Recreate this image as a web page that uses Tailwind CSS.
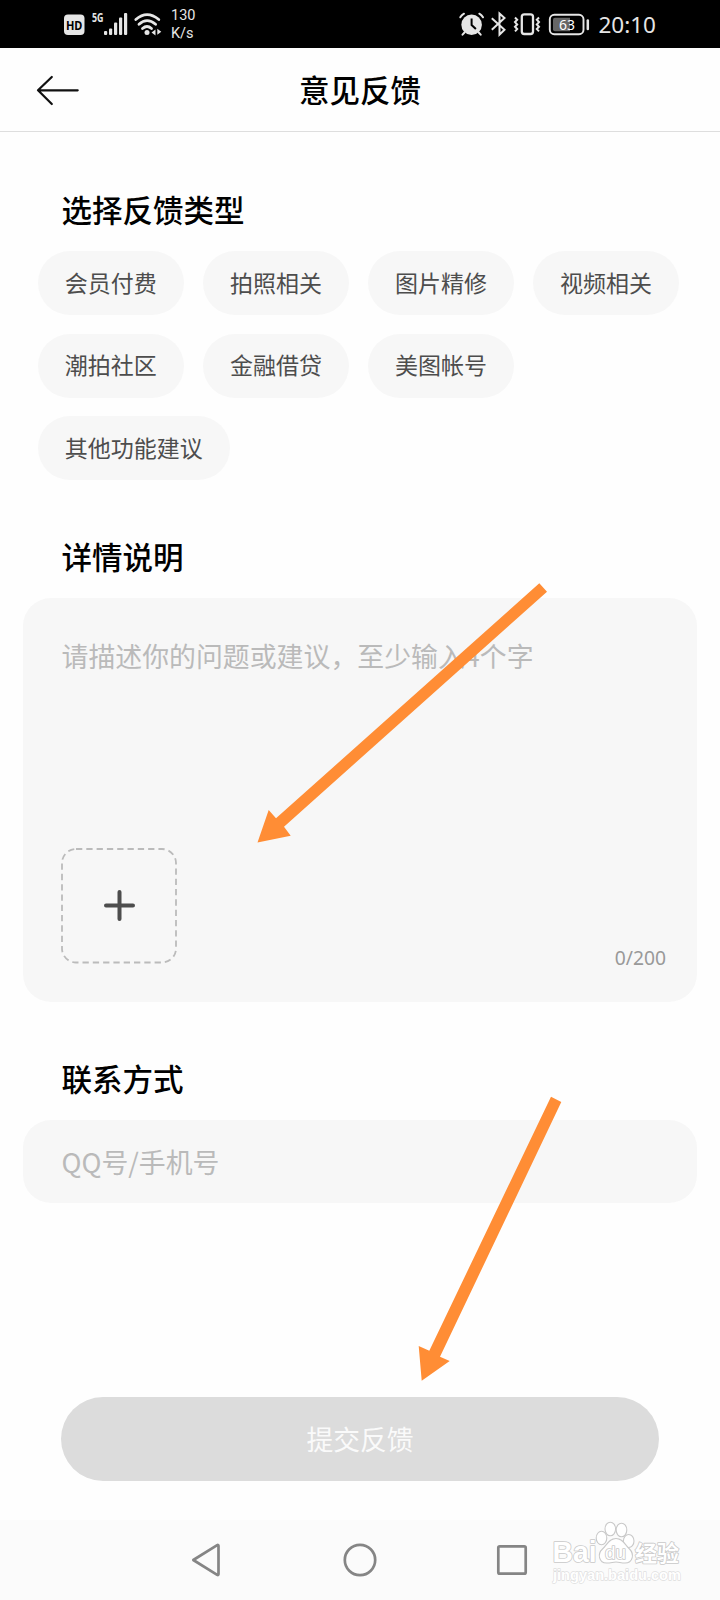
<!DOCTYPE html>
<html lang="zh-CN">
<head>
<meta charset="utf-8">
<title>意见反馈</title>
<script src="https://cdn.jsdelivr.net/npm/@tailwindcss/browser@4"></script>
</head>
<body class="bg-white">
<div class="relative flex h-[1600px] w-[720px] flex-col overflow-hidden bg-[#fefefe] font-['Noto_Sans_CJK_SC',sans-serif] text-black">

  <!-- Status bar -->
  <div class="flex h-12 shrink-0 items-center justify-between bg-black pr-[64px] pl-[60px] text-[#e6e6e6]">
    <div class="flex h-12">
      <svg class="h-12 w-[106px]" viewBox="60 0 106 48" fill="#e6e6e6">
        <rect x="64" y="14.5" width="20.5" height="20.5" rx="4"/>
        <text x="74.2" y="29.8" text-anchor="middle" font-family="Noto Sans" font-weight="700" font-size="12.5" textLength="16.5" lengthAdjust="spacingAndGlyphs" fill="#000">HD</text>
        <text x="92" y="22.3" font-family="Noto Sans" font-weight="700" font-size="12.5" textLength="11.5" lengthAdjust="spacingAndGlyphs">5G</text>
        <rect x="104" y="31" width="3.2" height="4" rx="1"/>
        <rect x="109" y="28.5" width="3.2" height="6.5" rx="1"/>
        <rect x="114" y="22.5" width="3.2" height="12.5" rx="1"/>
        <rect x="119" y="17.5" width="3.2" height="17.5" rx="1"/>
        <rect x="124" y="13" width="3.2" height="22" rx="1"/>
        <g fill="none" stroke="#e6e6e6" stroke-width="2.8" stroke-linecap="round">
          <path d="M135.800 19.500Q147 9.700 158.800 19.500"/>
          <path d="M139 24.300Q147 17 155.600 24.300"/>
          <path d="M142.500 28.500Q147 24.500 151.500 28.500"/>
        </g>
        <circle cx="147" cy="32.500" r="2.500"/>
        <path d="M151.500 32.500l4-3v6zM157.300 28.700l4 3-4 3z"/>
      </svg>
      <div class="flex flex-col pt-[7px] pl-[5px] font-[Roboto] text-[14.5px] leading-[17.5px]"><span>130</span><span>K/s</span></div>
    </div>
    <div class="flex h-12 items-center">
      <svg class="h-12 w-[136px]" viewBox="456 0 136 48" fill="none" stroke="#e6e6e6" stroke-width="2">
        <circle cx="471.600" cy="24.700" r="10.300" fill="#e6e6e6" stroke="none"/>
        <path d="M460.300 17.300q1.300-2.300 3.700-3.600M483 17.300q-1.300-2.300-3.700-3.600M464.500 32.500l-2 2.200M478.700 32.500l2 2.200" stroke-linecap="round"/>
        <path d="M471.600 18.500v6.500l4.300 4" stroke="#000"/>
        <path d="M491.800 18.300l12.700 11.400-5 5V13.500l5 4.500-12.700 11.800"/>
        <rect x="521.800" y="14.300" width="11.200" height="19.700" rx="2.500" stroke-width="2.300"/>
        <path d="M515 17.500l2.200 2.300-2.200 2.300 2.200 2.400-2.200 2.300 2.200 2.300-2.200 2.300M539 17.500l-2.200 2.300 2.200 2.300-2.200 2.400 2.200 2.300-2.200 2.300 2.200 2.300"/>
        <rect x="549.800" y="14.800" width="33.700" height="19.400" rx="4.500" stroke-width="1.900"/>
        <path d="M555 17.800h15v13.400h-15q-2 0-2-2v-9.400q0-2 2-2z" fill="#666" stroke="none"/>
        <path d="M587.800 20.500v8.500" stroke-width="2.500" stroke-linecap="round"/>
        <text x="567" y="29.800" text-anchor="middle" font-family="Noto Sans" font-size="15" textLength="16" lengthAdjust="spacingAndGlyphs" fill="#fff" stroke="none">63</text>
      </svg>
      <span class="pt-[3px] pl-[6px] font-['Noto_Sans'] text-[22.5px] leading-none">20:10</span>
    </div>
  </div>

  <!-- Title bar -->
  <header class="grid h-[84px] shrink-0 grid-cols-3 items-center border-b border-[#dedede] px-9">
    <svg class="h-8 w-11" viewBox="36 74 44 32" fill="none" stroke="#111" stroke-width="2.200" stroke-linecap="round" stroke-linejoin="round"><path d="M77.700 90.300H38M51.800 77L38 90.300 51.800 104"/></svg>
    <h1 class="pb-px text-center text-[30.5px] leading-none font-medium">意见反馈</h1>
  </header>

  <main class="flex flex-col px-[23px]">
    <h2 class="mt-[61px] ml-[38.5px] text-[30.5px] leading-[32px] font-medium">选择反馈类型</h2>
    <div class="mt-[26px] ml-[15px] flex w-[660px] flex-wrap gap-x-[19.5px] gap-y-[18.5px] text-[23px] leading-none text-[#4d4d4d]">
      <span class="flex h-16 items-center rounded-full bg-[#f7f7f7] px-[26.8px] pb-[2px]">会员付费</span>
      <span class="flex h-16 items-center rounded-full bg-[#f7f7f7] px-[26.8px] pb-[2px]">拍照相关</span>
      <span class="flex h-16 items-center rounded-full bg-[#f7f7f7] px-[26.8px] pb-[2px]">图片精修</span>
      <span class="flex h-16 items-center rounded-full bg-[#f7f7f7] px-[26.8px] pb-[2px]">视频相关</span>
      <span class="flex h-16 items-center rounded-full bg-[#f7f7f7] px-[26.8px] pb-[2px]">潮拍社区</span>
      <span class="flex h-16 items-center rounded-full bg-[#f7f7f7] px-[26.8px] pb-[2px]">金融借贷</span>
      <span class="flex h-16 items-center rounded-full bg-[#f7f7f7] px-[26.8px] pb-[2px]">美图帐号</span>
      <span class="flex h-16 items-center rounded-full bg-[#f7f7f7] px-[26.8px] pb-[2px]">其他功能建议</span>
    </div>

    <h2 class="mt-[60px] ml-[38.5px] text-[30.5px] leading-[32px] font-medium">详情说明</h2>
    <section class="mt-[26px] flex h-[404px] flex-col justify-between rounded-[28px] bg-[#f7f7f7] pt-[42px] pr-[31px] pb-[38px] pl-[37.5px]">
      <p class="pl-px text-[26.9px] leading-[32px] text-[#bababa]">请描述你的问题或建议，至少输入4个字</p>
      <div class="flex items-end justify-between">
        <svg class="size-[116px]" viewBox="0 0 116 116" fill="none">
          <rect x="1" y="1" width="114" height="113.500" rx="14" stroke="#bbb" stroke-width="1.800" stroke-dasharray="6.300 4"/>
          <path d="M58.500 44v27M45 57.500h27" stroke="#4d4d4d" stroke-width="4" stroke-linecap="round"/>
        </svg>
        <span class="pb-px font-['Noto_Sans'] text-[19.3px] leading-[10px] text-[#999]">0/200</span>
      </div>
    </section>

    <h2 class="mt-[60px] ml-[38.5px] text-[30.5px] leading-[32px] font-medium">联系方式</h2>
    <div class="mt-[26px] flex h-[83px] items-center rounded-[28px] bg-[#f7f7f7] pt-[2px] pl-[38.5px] text-[26.9px] leading-none text-[#bababa]">QQ号/手机号</div>
    <button class="mx-[38px] mt-[194px] h-[84px] rounded-full bg-[#dcdcdc] text-[26.8px] leading-none text-[#fafafa]">提交反馈</button>
  </main>

  <!-- System navigation -->
  <nav class="mt-auto flex h-20 shrink-0 items-center justify-between bg-[#fbfbfb] pr-[190px] pl-[190px]">
    <svg class="size-9" viewBox="190 1542 36 36" fill="none" stroke="#858585" stroke-width="2.700" stroke-linejoin="round"><path d="M193.300 1560L217.200 1545.200Q218.500 1544.500 218.500 1546V1574Q218.500 1575.500 217.200 1574.800Z"/></svg>
    <svg class="size-9" viewBox="0 0 36 36" fill="none" stroke="#858585" stroke-width="2.700"><circle cx="18" cy="18" r="15.200"/></svg>
    <svg class="size-9" viewBox="0 0 36 36" fill="none" stroke="#858585" stroke-width="2.700"><rect x="4.300" y="4.300" width="27.400" height="27.400" rx="1.500"/></svg>
  </nav>

  <!-- Annotations and watermark -->
  <svg class="pointer-events-none absolute inset-0 h-[1600px] w-[720px]" viewBox="0 0 720 1600">
    <g fill="#ff8d35">
      <path d="M257.500 842.500L268.700 810l7.300 8.300L539.300 583.300l7.700 8.400L284 826.700l6.700 9z"/>
      <path d="M421.700 1380.700L418.700 1346l10.600 4.700L551 1096.700l10.300 5.300L440 1356.700l9.700 4.300z"/>
    </g>
    <g fill="#fff" stroke="#c9c9c9" stroke-width="1.100" stroke-linejoin="round">
      <ellipse cx="601.500" cy="1538" rx="5.300" ry="6.700"/>
      <ellipse cx="610.300" cy="1529" rx="5.300" ry="6.800"/>
      <ellipse cx="621.500" cy="1530" rx="5.300" ry="6.800"/>
      <ellipse cx="628.700" cy="1541" rx="5.300" ry="6.500"/>
      <path d="M616 1538.500C609 1538.500 607 1545 602.500 1549C597 1554 599 1563 606.500 1563C611 1563 613 1562 616 1562C619 1562 621 1563 625 1563C633 1563 634.500 1554 629.500 1549C625 1545 623 1538.500 616 1538.500Z"/>
      <g font-family="Liberation Sans, sans-serif" font-weight="700" paint-order="stroke" stroke-width="1.600">
        <text x="552.500" y="1562" font-size="29" textLength="44" lengthAdjust="spacingAndGlyphs">Bai</text>
        <text x="605" y="1559" font-size="18" font-weight="400" textLength="21" lengthAdjust="spacingAndGlyphs">du</text>
        <text x="635" y="1560.500" font-family="Noto Sans CJK SC" font-size="22" textLength="44" lengthAdjust="spacingAndGlyphs">经验</text>
        <text x="553" y="1580" font-size="15" stroke="#dedede" stroke-width="1.300" textLength="128" lengthAdjust="spacingAndGlyphs">jingyan.baidu.com</text>
      </g>
    </g>
  </svg>
</div>
</body>
</html>
